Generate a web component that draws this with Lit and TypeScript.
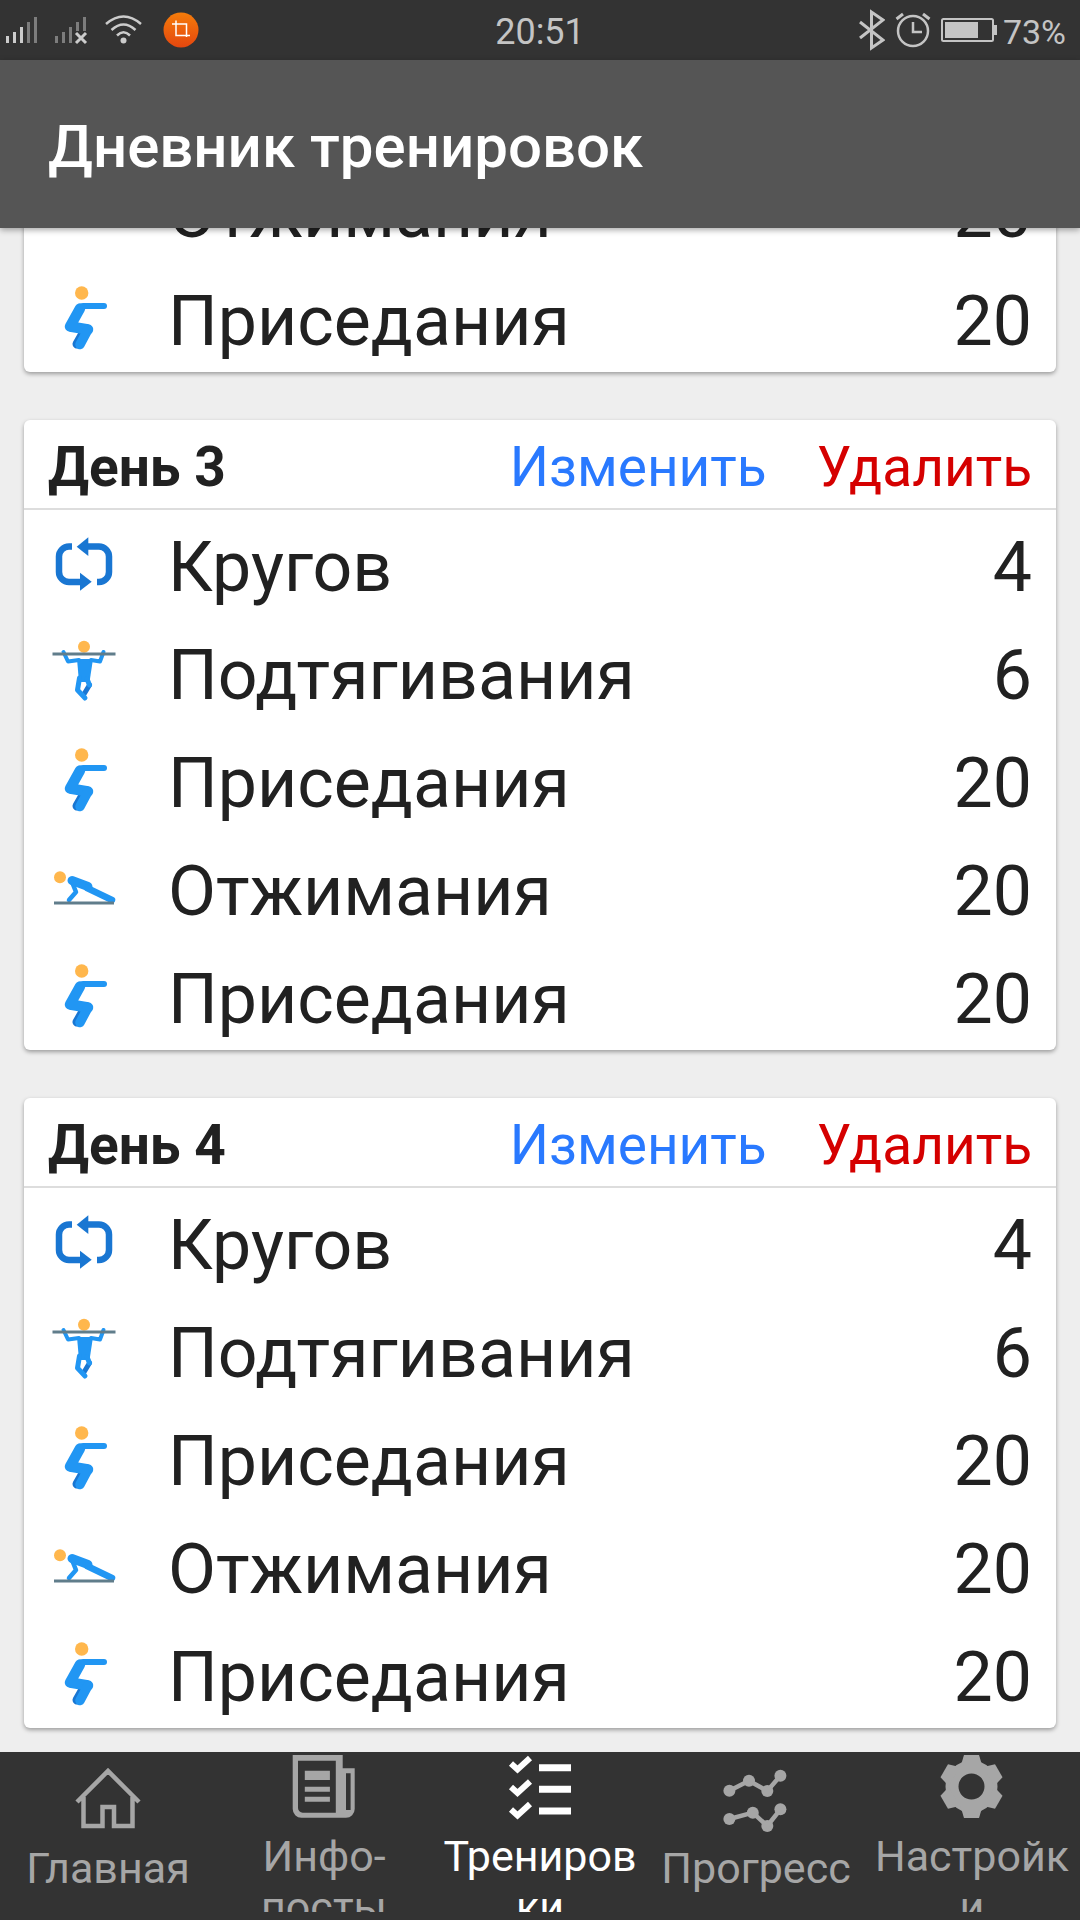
import { LitElement, html, css, svg } from 'lit';
import { customElement } from 'lit/decorators.js';

const BLUE = '#2196F3';
const DARK_BLUE = '#1976D2';
const SKIN = '#FFB74D';
const STEEL = '#607D8B';

const exerciseIcons: Record<string, unknown> = {
  cycle: svg`
    <path d="M25 18.5H22a10 10 0 0 0-10 10V44a10 10 0 0 0 10 10H36" fill="none" stroke=${DARK_BLUE} stroke-width="6.5"/>
    <path d="M38 18.5H52a10 10 0 0 1 10 10V44a10 10 0 0 1-10 10H50" fill="none" stroke=${DARK_BLUE} stroke-width="6.5"/>
    <path d="M41.3 9.3V28L29.7 18.7Z" fill=${DARK_BLUE}/>
    <path d="M33 44.7V62.7L44.7 53.7Z" fill=${DARK_BLUE}/>`,
  pullup: svg`
    <circle cx="37" cy="10.7" r="6" fill=${SKIN}/>
    <path d="M42.5 49L36.5 59" fill="none" stroke=${DARK_BLUE} stroke-width="5" stroke-linecap="round"/>
    <path d="M30 23H46L42.5 46H32Z" fill=${BLUE}/>
    <path d="M16.5 16L21 25.5L32 24M56.5 16L53 25.5L44 24" fill="none" stroke=${BLUE} stroke-width="4" stroke-linecap="round" stroke-linejoin="round"/>
    <path d="M32.5 42L30.5 54L38 62M40 43L42.5 49" fill="none" stroke=${BLUE} stroke-width="5" stroke-linecap="round" stroke-linejoin="round"/>
    <path d="M5.5 18H68.5" stroke=${STEEL} stroke-width="3"/>`,
  squat: svg`
    <circle cx="34.7" cy="11" r="6.7" fill=${SKIN}/>
    <path d="M36 51.5L30 62" fill="none" stroke=${DARK_BLUE} stroke-width="9" stroke-linecap="round"/>
    <path d="M36 24H57" fill="none" stroke=${BLUE} stroke-width="6" stroke-linecap="round"/>
    <path d="M33 26.5L23 44.5L41 47.5" fill="none" stroke=${BLUE} stroke-width="10.5" stroke-linecap="round" stroke-linejoin="round"/>
    <path d="M41 47.5L33 62.5" fill="none" stroke=${BLUE} stroke-width="9.5" stroke-linecap="round"/>`,
  pushup: svg`
    <circle cx="13" cy="25.3" r="6" fill=${SKIN}/>
    <path d="M25 30L29 40L22 48" fill="none" stroke=${BLUE} stroke-width="4.5" stroke-linecap="round" stroke-linejoin="round"/>
    <path d="M25 28.5L41 34.5" fill="none" stroke=${BLUE} stroke-width="9" stroke-linecap="round"/>
    <path d="M40 36L65 48" fill="none" stroke=${BLUE} stroke-width="6.5" stroke-linecap="round"/>
    <path d="M7 51H67" stroke=${STEEL} stroke-width="3"/>`,
};

type Exercise = { icon: string; name: string; count: number };

const ROWS: Exercise[] = [
  { icon: 'cycle', name: 'Кругов', count: 4 },
  { icon: 'pullup', name: 'Подтягивания', count: 6 },
  { icon: 'squat', name: 'Приседания', count: 20 },
  { icon: 'pushup', name: 'Отжимания', count: 20 },
  { icon: 'squat', name: 'Приседания', count: 20 },
];

const gearTeeth = [0, 60, 120, 180, 240, 300];

const navIcons: Record<string, unknown> = {
  home: svg`
    <path d="M5 38L36 7L67 38M11.5 33V62H30.5V43H42V62H60.5V33" fill="none" stroke="currentColor" stroke-width="4.5"/>`,
  news: svg`
    <path fill="currentColor" fill-rule="evenodd" d="M4.7 3H54.7V16.3H66.7V57a8.7 8.7 0 0 1-8.7 8.7H13.4A8.7 8.7 0 0 1 4.7 57ZM10 8.7V56a4.7 4.7 0 0 0 4.7 4.7H47.8V8.7ZM58 21.3V58H62.6V21.3ZM16.8 18.7H41.9V28H16.8ZM16.8 34.7H41.9V39.7H16.8ZM16.8 44.7H41.9V49.7H16.8Z"/>`,
  tasks: svg`
    <path d="M7 11.5l6.5 6L26 6M7 35l6.5 6L26 29.5M7 57.5l6.5 6L26 52" fill="none" stroke="currentColor" stroke-width="6"/>
    <path d="M35 15.7H67M35 37.3H67M35 59H67" stroke="currentColor" stroke-width="7"/>`,
  progress: svg`
    <g fill="currentColor" stroke="none">
      <circle cx="9.4" cy="26.7" r="6"/><circle cx="29" cy="16.7" r="6"/><circle cx="47.3" cy="27" r="6"/><circle cx="60.4" cy="11.7" r="6"/>
      <circle cx="9.4" cy="55" r="6"/><circle cx="32.8" cy="48.7" r="6"/><circle cx="47.3" cy="62" r="6"/><circle cx="60.4" cy="45.3" r="6"/>
    </g>
    <path d="M9.4 26.7L29 16.7L47.3 27L60.4 11.7M9.4 55L32.8 48.7L47.3 62L60.4 45.3" fill="none" stroke="currentColor" stroke-width="4.5"/>`,
  gear: svg`
    <g transform="translate(35.5 34.5)" fill="currentColor">
      <circle r="19.5" fill="none" stroke="currentColor" stroke-width="13"/>
      ${gearTeeth.map(a => svg`<path transform="rotate(${a})" d="M-7.5-31.5H7.5L11-20H-11Z"/>`)}
    </g>`,
};

const NAV = [
  { icon: 'home', lines: ['Главная'] },
  { icon: 'news', lines: ['Инфо-', 'посты'] },
  { icon: 'tasks', lines: ['Трениров', 'ки'], active: true },
  { icon: 'progress', lines: ['Прогресс'] },
  { icon: 'gear', lines: ['Настройк', 'и'] },
];

@customElement('app-root')
export class AppRoot extends LitElement {
  static styles = css`
    :host {
      display: flex;
      flex-direction: column;
      width: 1080px;
      height: 1920px;
      overflow: hidden;
      background: #eeeeee;
      font-family: Roboto, 'Noto Sans', sans-serif;
      color: #212121;
    }

    .status {
      flex: 0 0 60px;
      display: grid;
      grid-template-columns: 1fr auto 1fr;
      align-items: center;
      background: #333333;
      color: #c4c4c4;
      font-size: 36px;
    }
    .status svg { display: block; }
    .status-left { display: flex; align-items: center; padding-left: 6px; }
    .status-right { display: flex; align-items: center; justify-content: flex-end; padding-right: 14px; }
    .status span { padding-top: 4px; }
    .pct { margin-left: 6px; font-size: 34px; }

    .appbar {
      position: relative;
      z-index: 1;
      flex: 0 0 168px;
      box-sizing: border-box;
      display: flex;
      align-items: center;
      padding: 4px 0 0 48px;
      background: #555555;
      box-shadow: 0 2px 6px rgba(0, 0, 0, 0.35);
      color: #ffffff;
      font-size: 60px;
      font-weight: 500;
    }

    .scroll {
      flex: 1;
      min-height: 0;
      display: flex;
      flex-direction: column;
      justify-content: flex-end;
      gap: 48px;
      padding: 0 24px 24px;
      overflow: hidden;
    }

    .card {
      flex: none;
      background: #ffffff;
      border-radius: 6px;
      box-shadow: 0 2px 4px rgba(0, 0, 0, 0.35);
    }
    .card-head {
      height: 88px;
      box-sizing: content-box;
      display: flex;
      align-items: center;
      padding: 0 24px;
      border-bottom: 2px solid #dddddd;
      font-size: 55px;
    }
    .card-head span { padding-top: 6px; }
    .day { flex: 1; font-weight: 700; }
    .edit { color: #2979ff; }
    .remove { color: #d50000; margin-left: 50px; }

    .row {
      height: 108px;
      display: flex;
      align-items: center;
      padding: 0 24px 0 23px;
      font-size: 69.8px;
    }
    .row span { padding-top: 5px; }
    .row svg { flex: none; width: 72px; height: 72px; margin-right: 49px; }
    .name { flex: 1; }

    .nav {
      flex: 0 0 168px;
      min-height: 0;
      box-sizing: border-box;
      display: grid;
      grid-template-columns: repeat(5, 216px);
      grid-template-rows: 160px;
      background: #333333;
    }
    .tab {
      display: flex;
      flex-direction: column;
      align-items: center;
      padding-top: 12px;
      overflow: hidden;
      color: #a6a6a6;
      font-size: 43px;
      line-height: 51px;
      text-align: center;
    }
    .tab.two { padding-top: 0; }
    .tab.active { color: #ffffff; }
    .tab svg { flex: none; width: 72px; height: 72px; margin-bottom: 7px; }
  `;

  private card(day: number) {
    return html`
      <section class="card">
        <div class="card-head">
          <span class="day">День ${day}</span>
          <span class="edit">Изменить</span>
          <span class="remove">Удалить</span>
        </div>
        ${ROWS.map(r => html`
          <div class="row">
            <svg viewBox="0 0 72 72">${exerciseIcons[r.icon]}</svg>
            <span class="name">${r.name}</span>
            <span>${r.count}</span>
          </div>
        `)}
      </section>
    `;
  }

  private statusLeft() {
    const strong = '#cccccc';
    const dim = '#7d7d7d';
    return html`
      <svg width="36" height="60" viewBox="0 0 36 60">
        <rect x="0" y="36" width="3" height="7" fill=${strong}/>
        <rect x="7" y="32" width="3" height="11" fill=${strong}/>
        <rect x="14" y="27" width="3" height="16" fill=${strong}/>
        <rect x="21" y="22" width="3" height="21" fill=${dim}/>
        <rect x="28" y="17" width="3" height="26" fill=${dim}/>
      </svg>
      <svg style="margin-left:13px" width="34" height="60" viewBox="0 0 34 60">
        <rect x="0" y="36" width="3" height="7" fill=${dim}/>
        <rect x="7" y="32" width="3" height="11" fill=${dim}/>
        <rect x="14" y="27" width="3" height="16" fill=${dim}/>
        <rect x="21" y="22" width="3" height="9" fill=${dim}/>
        <rect x="28" y="17" width="3" height="14" fill=${dim}/>
        <path d="M21 33L31 43M31 33L21 43" stroke=${strong} stroke-width="3"/>
      </svg>
      <svg style="margin-left:16px" width="38" height="60" viewBox="0 0 38 60">
        <circle cx="18.5" cy="40.5" r="3" fill=${strong}/>
        <path d="M1 24Q18.5 9 36 24M6.5 30Q18.5 19 30.5 30M12 35.5Q18.5 29 25 35.5" fill="none" stroke=${strong} stroke-width="2.5"/>
      </svg>
      <svg style="margin-left:20px" width="36" height="60" viewBox="0 0 36 60">
        <defs>
          <linearGradient id="crop" x1="0" y1="0" x2="0" y2="1">
            <stop offset="0" stop-color="#f57c0a"/>
            <stop offset="1" stop-color="#e4470f"/>
          </linearGradient>
        </defs>
        <circle cx="18" cy="30" r="17.5" fill="url(#crop)"/>
        <path d="M9 24H23.5V37M13 20.5V35.5H27" fill="none" stroke="#ffffff" stroke-width="1.5"/>
      </svg>
    `;
  }

  private statusRight() {
    return html`
      <svg width="26" height="60" viewBox="0 0 26 60">
        <path d="M1 22L24 40L12.5 48V12L24 20L1 38" fill="none" stroke="currentColor" stroke-width="3"/>
      </svg>
      <svg style="margin-left:10px" width="36" height="60" viewBox="0 0 36 60">
        <circle cx="18" cy="31" r="15" fill="none" stroke="currentColor" stroke-width="2.5"/>
        <path d="M18 22V32H27" fill="none" stroke="currentColor" stroke-width="2.5"/>
        <path d="M1.5 19L8 14M34.5 19L28 14" fill="none" stroke="currentColor" stroke-width="3"/>
      </svg>
      <svg style="margin-left:10px" width="56" height="60" viewBox="0 0 56 60">
        <rect x="1" y="19" width="51" height="22" rx="1.5" fill="none" stroke="currentColor" stroke-width="2"/>
        <rect x="4" y="22" width="33" height="16" fill="currentColor"/>
        <rect x="53" y="25" width="3" height="10" fill="currentColor"/>
      </svg>
      <span class="pct">73%</span>
    `;
  }

  override render() {
    return html`
      <div class="status">
        <div class="status-left">${this.statusLeft()}</div>
        <span>20:51</span>
        <div class="status-right">${this.statusRight()}</div>
      </div>
      <header class="appbar">Дневник тренировок</header>
      <main class="scroll">
        ${[2, 3, 4].map(d => this.card(d))}
      </main>
      <nav class="nav">
        ${NAV.map(t => html`
          <div class="tab ${t.lines.length > 1 ? 'two' : ''} ${t.active ? 'active' : ''}">
            <svg viewBox="0 0 72 72">${navIcons[t.icon]}</svg>
            ${t.lines.map(l => html`<span>${l}</span>`)}
          </div>
        `)}
      </nav>
    `;
  }
}
